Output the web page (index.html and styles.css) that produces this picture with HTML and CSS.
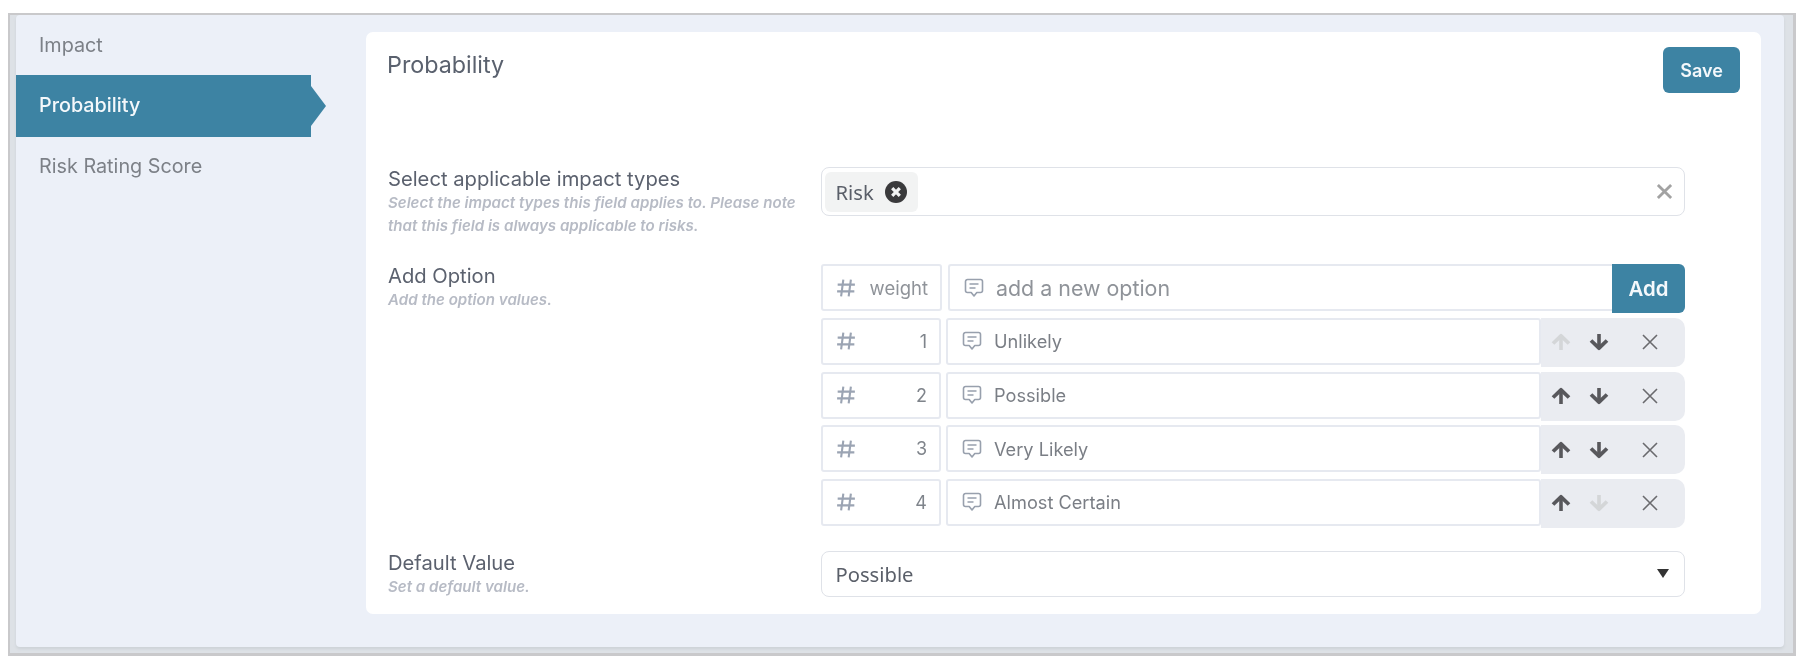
FILE: index.html
```html
<!DOCTYPE html>
<html lang="en">
<head>
<meta charset="utf-8">
<title>Probability</title>
<link rel="stylesheet" href="styles.css">
</head>
<body>
<svg class="defs" width="0" height="0" aria-hidden="true">
  <symbol id="i-hash" viewBox="0 0 18 18"><path d="M6.6 1.5 4.6 16.5M13.4 1.5 11.4 16.5M1.5 6h15.5M1 12h15.5" fill="none" stroke="currentColor" stroke-width="1.9"/></symbol>
  <symbol id="i-comment" viewBox="0 0 20 20"><path d="M3.5 1.5h13a2 2 0 0 1 2 2v9a2 2 0 0 1-2 2h-3.7L10 18l-2.8-3.500H3.500a2 2 0 0 1-2-2v-9a2 2 0 0 1 2-2z" fill="none" stroke="currentColor" stroke-width="1.6" stroke-linejoin="round"/><path d="M5.500 6h9M5.500 10h6" fill="none" stroke="currentColor" stroke-width="1.6"/></symbol>
  <symbol id="i-up" viewBox="0 0 20 18"><path d="M2 10.500 10 2.800 18 10.500" fill="none" stroke="currentColor" stroke-width="3.800" stroke-linejoin="round"/><path d="M10 4v13" fill="none" stroke="currentColor" stroke-width="3.600"/></symbol>
  <symbol id="i-down" viewBox="0 0 20 18"><path d="M2 7.500 10 15.200 18 7.500" fill="none" stroke="currentColor" stroke-width="3.800" stroke-linejoin="round"/><path d="M10 1v13" fill="none" stroke="currentColor" stroke-width="3.600"/></symbol>
  <symbol id="i-x" viewBox="0 0 18 18"><path d="M2 2l14 14M16 2 2 16" fill="none" stroke="currentColor" stroke-width="1.600"/></symbol>
</svg>

<div class="frame">
  <div class="panel">
    <nav class="sidebar">
      <a class="nav-item">Impact</a>
      <a class="nav-item active">Probability</a>
      <a class="nav-item">Risk Rating Score</a>
    </nav>

    <main class="card">
      <header class="card-head">
        <h1 class="card-title">Probability</h1>
        <button class="btn btn-save">Save</button>
      </header>

      <div class="form">
        <section class="form-row">
          <div class="label-block">
            <div class="label">Select applicable impact types</div>
            <div class="hint">Select the impact types this field applies to. Please note that this field is always applicable to risks.</div>
          </div>
          <div class="multi">
            <span class="chip">Risk
              <svg class="chip-x" viewBox="0 0 22 22"><circle cx="11" cy="11" r="11" fill="#3a3a3c"/><path d="M7.200 7.200l7.600 7.600M14.800 7.200l-7.600 7.600" stroke="#f2f3f3" stroke-width="3.200" fill="none"/></svg>
            </span>
            <svg class="clear-x" viewBox="0 0 18 18"><path d="M2 2l14 14M16 2 2 16" fill="none" stroke="#a2a2a2" stroke-width="3"/></svg>
          </div>
        </section>

        <section class="form-row">
          <div class="label-block">
            <div class="label">Add Option</div>
            <div class="hint">Add the option values.</div>
          </div>
          <div class="options">
            <div class="opt-add">
              <div class="box weight-box new"><svg class="ic-hash"><use href="#i-hash"/></svg><span class="num placeholder">weight</span></div>
              <div class="box text-box new"><svg class="ic-comment"><use href="#i-comment"/></svg><span class="placeholder big">add a new option</span></div>
              <button class="btn btn-add">Add</button>
            </div>
            <div class="opt-row">
              <div class="box weight-box"><svg class="ic-hash"><use href="#i-hash"/></svg><span class="num">1</span></div>
              <div class="box text-box"><svg class="ic-comment"><use href="#i-comment"/></svg><span class="opt-text">Unlikely</span></div>
              <div class="actions">
                <svg class="ic-arrow off"><use href="#i-up"/></svg>
                <svg class="ic-arrow"><use href="#i-down"/></svg>
                <svg class="ic-x"><use href="#i-x"/></svg>
              </div>
            </div>
            <div class="opt-row">
              <div class="box weight-box"><svg class="ic-hash"><use href="#i-hash"/></svg><span class="num">2</span></div>
              <div class="box text-box"><svg class="ic-comment"><use href="#i-comment"/></svg><span class="opt-text">Possible</span></div>
              <div class="actions">
                <svg class="ic-arrow"><use href="#i-up"/></svg>
                <svg class="ic-arrow"><use href="#i-down"/></svg>
                <svg class="ic-x"><use href="#i-x"/></svg>
              </div>
            </div>
            <div class="opt-row">
              <div class="box weight-box"><svg class="ic-hash"><use href="#i-hash"/></svg><span class="num">3</span></div>
              <div class="box text-box"><svg class="ic-comment"><use href="#i-comment"/></svg><span class="opt-text">Very Likely</span></div>
              <div class="actions">
                <svg class="ic-arrow"><use href="#i-up"/></svg>
                <svg class="ic-arrow"><use href="#i-down"/></svg>
                <svg class="ic-x"><use href="#i-x"/></svg>
              </div>
            </div>
            <div class="opt-row">
              <div class="box weight-box"><svg class="ic-hash"><use href="#i-hash"/></svg><span class="num">4</span></div>
              <div class="box text-box"><svg class="ic-comment"><use href="#i-comment"/></svg><span class="opt-text">Almost Certain</span></div>
              <div class="actions">
                <svg class="ic-arrow"><use href="#i-up"/></svg>
                <svg class="ic-arrow off"><use href="#i-down"/></svg>
                <svg class="ic-x"><use href="#i-x"/></svg>
              </div>
            </div>
          </div>
        </section>

        <section class="form-row">
          <div class="label-block">
            <div class="label">Default Value</div>
            <div class="hint">Set a default value.</div>
          </div>
          <div class="select">
            <span>Possible</span>
            <span class="caret"></span>
          </div>
        </section>
      </div>
    </main>
  </div>
</div>
</body>
</html>
```
FILE: styles.css
```css
* { box-sizing: border-box; }
html, body { margin: 0; padding: 0; background: #fff; }
body { font-family: Inter, "Liberation Sans", sans-serif; width: 1814px; height: 664px; overflow: hidden; }
.defs { position: absolute; }

.frame {
  margin: 13px 0 0 8px;
  width: 1788px;
  height: 643px;
  border: solid #c9c9cb;
  border-width: 2px 3px 3px 2px;
  background: #dde1e6;
  padding: 0 9px 6px 6px;
  filter: blur(0.5px);
}
.panel {
  display: flex;
  height: 100%;
  background: #ecf0f8;
  border-radius: 4px;
  box-shadow: 0 2px 3px #cdd2d7;
}

.sidebar { width: 350px; flex: none; }
.nav-item {
  display: flex;
  align-items: center;
  position: relative;
  width: 295px;
  height: 60px;
  padding: 0 0 1px 23px;
  font-size: 19.800px;
  color: #7c8087;
}
.nav-item.active { height: 61.500px; background: #3d83a3; color: #f4f8fb; font-weight: 500; }
.nav-item.active::after {
  content: "";
  position: absolute;
  left: 100%;
  top: 10.500px;
  border-style: solid;
  border-width: 20px 0 20px 15px;
  border-color: transparent transparent transparent #3d83a3;
}

.card {
  width: 1395px;
  height: 582px;
  margin-top: 17px;
  padding: 15px 21px 0 22px;
  background: #fff;
  border-radius: 7px;
}
.card-head { display: flex; justify-content: space-between; align-items: flex-start; height: 120px; }
.card-title { margin: 2px 0 0 -1px; font-size: 23.300px; line-height: 32px; font-weight: 400; color: #5a616e; }

.btn { border: 0; background: #3d83a3; color: #f4f8fb; font-family: inherit; font-weight: 600; font-size: 18px; padding: 0; }
.btn-save { width: 77px; height: 46px; border-radius: 6px; }
.btn-add { flex: none; width: 73px; height: 49.500px; margin: -0.500px 0 -2px; border-radius: 0 6px 6px 0; font-size: 20.400px; }

.form { display: flex; flex-direction: column; gap: 25px; padding-right: 55px; }
.form-row { display: flex; }
.label-block { width: 433px; flex: none; padding-bottom: 2px; }
.label { font-size: 20.200px; line-height: 24px; color: #5b616e; }
.hint { width: 420px; font-size: 15.100px; line-height: 23px; font-style: italic; font-weight: 600; color: #b7bbc5; }

.multi, .select {
  display: flex;
  align-items: center;
  justify-content: space-between;
  flex: 1;
  border: 1.500px solid #dfe2e8;
  border-radius: 8px;
  font-family: "Noto Sans", sans-serif;
  font-size: 20.200px;
  color: #5a5f69;
}
.multi { height: 49px; padding: 0 11.500px 0 2.500px; }
.chip {
  display: flex;
  align-items: center;
  gap: 11px;
  height: 40px;
  padding: 0 11px 0 11px;
  background: #f2f3f3;
  border-radius: 6px;
}
.chip-x { width: 22px; height: 22px; }
.clear-x { width: 17px; height: 17px; }
.select { height: 46px; padding: 0 14.500px 0 13.500px; }
.caret { border-style: solid; border-width: 9px 6.500px 0; border-color: #333 transparent transparent; margin-right: 1px; }

.options { flex: 1; display: flex; flex-direction: column; gap: 6.670px; }
.opt-add, .opt-row { display: flex; height: 47px; }
.opt-add { margin-bottom: 0.330px; }
.box {
  display: flex;
  align-items: center;
  height: 47px;
  border: 2px solid #e6e9f0;
  border-radius: 3px;
  background: #fff;
}
.weight-box { flex: none; width: 120px; padding: 0 12px 0 13px; justify-content: space-between; margin-right: 5px; }
.weight-box.new { width: 121px; margin-right: 6px; }
.text-box { flex: 1; padding-left: 14px; }
.text-box.new { padding-left: 14px; border-right: 0; border-radius: 3px 0 0 3px; }
.ic-hash { width: 20px; height: 20px; color: #9ba4b3; flex: none; }
.ic-comment { width: 20px; height: 20px; color: #98a0ad; flex: none; margin-right: 12px; }
.num { font-size: 18px; color: #7f848b; }
.placeholder { color: #8f9399; font-size: 18.500px; }
.placeholder.big { font-size: 21.400px; }
.opt-text { font-size: 18.200px; color: #7a7e85; }

.actions {
  flex: none;
  display: flex;
  align-items: center;
  width: 144px;
  height: 49px;
  margin-bottom: -2px;
  padding-left: 10px;
  background: #eaecf1;
  border-radius: 0 10px 10px 0;
}
.ic-arrow { width: 20px; height: 18px; margin-right: 18px; color: #58585c; }
.ic-arrow.off { color: #d4d6d8; }
.ic-x { width: 18px; height: 18px; margin-left: 14px; color: #6a6a6e; }
```
